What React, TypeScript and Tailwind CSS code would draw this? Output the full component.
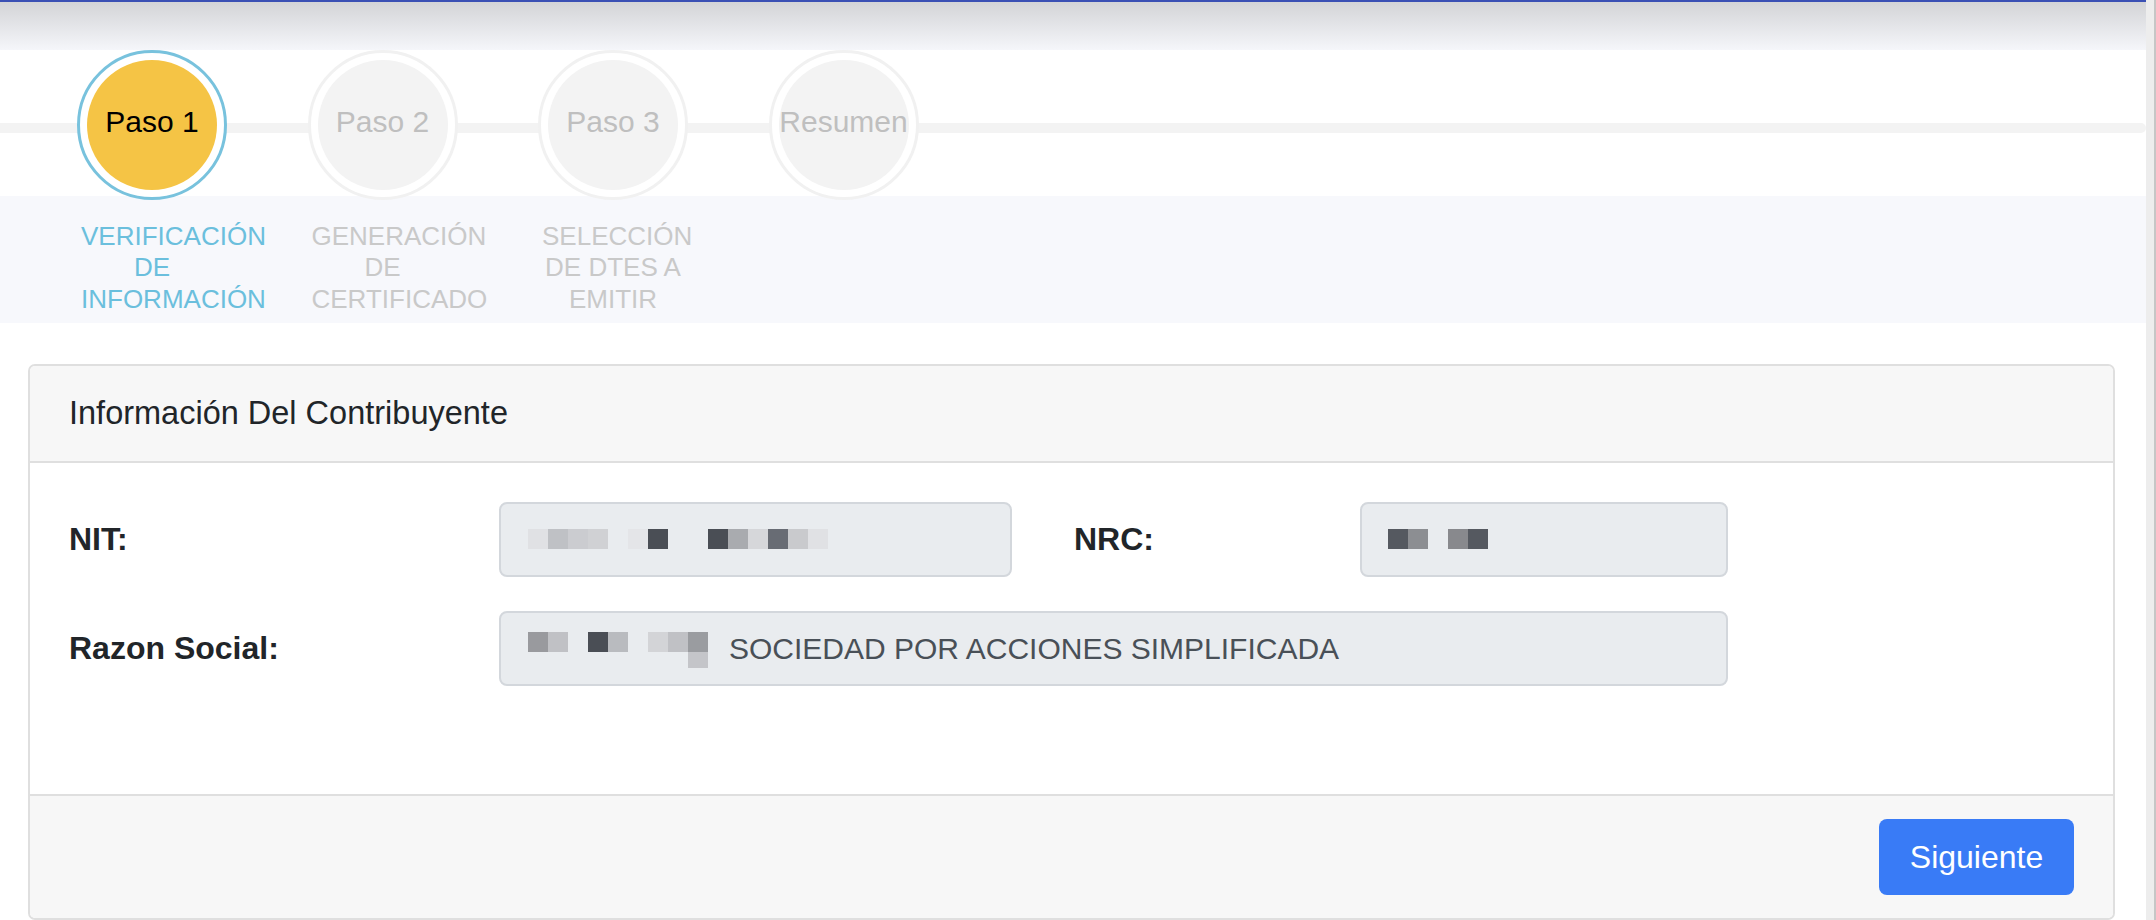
import React from "react";

interface Step {
  title: string;
  label: string;
  active: boolean;
}

const steps: Step[] = [
  { title: "Paso 1", label: "VERIFICACIÓN DE INFORMACIÓN", active: true },
  { title: "Paso 2", label: "GENERACIÓN DE CERTIFICADO", active: false },
  { title: "Paso 3", label: "SELECCIÓN DE DTES A EMITIR", active: false },
  { title: "Resumen", label: "", active: false },
];

// redacted values are shown as pixel blocks (null = gap)
const nitBlocks = [
  "#e0e1e4", "#bfc1c5", "#cbccd0", "#d0d1d4", null, "#e4e5e8", "#4a4e55",
  null, null, "#4a4e55", "#a9abaf", "#d6d7da", "#686c74", "#c9cacd", "#e0e1e4",
];
const nrcBlocks = ["#555960", "#8c8e92", null, "#88898d", "#555960"];
const razonBlocks = ["#999a9e", "#c0c1c5", null, "#4a4e55", "#b9bbbf", null, "#d3d4d7", "#c0c1c5"];

const Blocks: React.FC<{ colors: (string | null)[] }> = ({ colors }) => (
  <div className="flex">
    {colors.map((c, i) => (
      <span key={i} className="block h-[20px] w-[20px]" style={{ backgroundColor: c ?? "transparent" }} />
    ))}
  </div>
);

const StepItem: React.FC<{ step: Step }> = ({ step }) => (
  <div className="flex w-[150px] flex-col items-center">
    <div
      className={`flex h-[150px] w-[150px] items-center justify-center rounded-full border-[3px] bg-white p-[7px] ${
        step.active ? "border-[#78c2dd]" : "border-[#f1f1f1]"
      }`}
    >
      <div
        className={`flex h-full w-full items-center justify-center rounded-full pb-[7px] text-[30px] ${
          step.active ? "bg-[#f5c445] text-black" : "bg-[#f3f3f3] text-[#bfbfbf]"
        }`}
      >
        <span className="whitespace-nowrap">{step.title}</span>
      </div>
    </div>
    {step.label && (
      <p
        className={`mt-[21px] w-[142px] text-center text-[26px] leading-[31.5px] ${
          step.active ? "text-[#6bbfdd]" : "text-[#c9c9c9]"
        }`}
      >
        {step.label}
      </p>
    )}
  </div>
);

const App: React.FC = () => {
  return (
    <div className="flex h-[920px] w-full overflow-hidden bg-white font-['Liberation_Sans',Arial,sans-serif]">
      <div className="flex min-w-0 flex-1 flex-col">
        <div className="h-[50px] border-t-2 border-[#3a50b4] bg-linear-to-b from-[#d3d4d7] to-[#f5f6fa]" />

        <div className="relative h-[273px] bg-[linear-gradient(to_bottom,#ffffff_146px,#f7f8fc_146px)]">
          <div className="absolute left-0 right-0 top-[73px] h-[10px] rounded-r-full bg-[#f3f3f3]" />
          <div className="relative flex gap-[80.5px] pl-[77px]">
            {steps.map((s) => (
              <StepItem key={s.title} step={s} />
            ))}
          </div>
        </div>

        <div className="ml-[28px] mr-[31px] mt-[41px] overflow-hidden rounded-[7px] border-2 border-[#dfdfdf]">
          <div className="flex h-[97px] items-center border-b-2 border-[#dfdfdf] bg-[#f7f7f7] pl-[39px] text-[32.5px] text-[#212529]">
            Información Del Contribuyente
          </div>

          <div className="px-[39px] pb-[108px] pt-[39px] text-[32px] text-[#212529]">
            <div className="grid grid-cols-[430px_513px_62px_286px_368px] items-center gap-y-[34px]">
              <div className="font-bold">NIT:</div>
              <div className="flex h-[75px] items-center rounded-[8px] border-2 border-[#d3d7dc] bg-[#e9ecef] pl-[27px]">
                <Blocks colors={nitBlocks} />
              </div>
              <div />
              <div className="font-bold">NRC:</div>
              <div className="flex h-[75px] items-center rounded-[8px] border-2 border-[#d3d7dc] bg-[#e9ecef] pl-[26px]">
                <Blocks colors={nrcBlocks} />
              </div>

              <div className="font-bold">Razon Social:</div>
              <div className="col-span-4 flex h-[75px] items-center rounded-[8px] border-2 border-[#d3d7dc] bg-[#e9ecef] pl-[27px]">
                <div className="flex self-start pt-[19px]">
                  <Blocks colors={razonBlocks} />
                  <div className="flex flex-col">
                    <span className="block h-[20px] w-[20px] bg-[#9a9ca0]" />
                    <span className="block h-[16px] w-[20px] bg-[#c4c5c9]" />
                  </div>
                </div>
                <span className="ml-[21px] text-[30px] text-[#495057]">
                  SOCIEDAD POR ACCIONES SIMPLIFICADA
                </span>
              </div>
            </div>
          </div>

          <div className="flex justify-end border-t-2 border-[#dfdfdf] bg-[#f7f7f7] pb-[24px] pr-[39px] pt-[23px]">
            <button className="h-[76px] w-[195px] rounded-[8px] bg-[#397bf6] text-[32px] text-white">
              Siguiente
            </button>
          </div>
        </div>
      </div>

      <div className="w-[10px] shrink-0 border-r-2 border-[#c6c6c6] bg-[#ededed]" />
    </div>
  );
};

export default App;
